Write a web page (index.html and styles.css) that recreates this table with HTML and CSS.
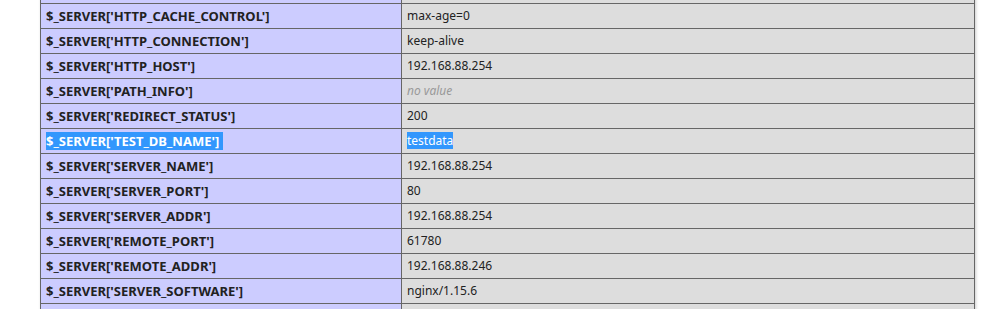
FILE: index.html
```html
<!DOCTYPE html>
<html>
<head>
<meta charset="utf-8">
<link rel="stylesheet" href="styles.css">
</head>
<body>
<div class="center">
<table>
<tr><td class="e">&nbsp;</td><td class="v">&nbsp;</td></tr>
<tr><td class="e">$_SERVER['HTTP_CACHE_CONTROL']</td><td class="v">max-age=0</td></tr>
<tr><td class="e">$_SERVER['HTTP_CONNECTION']</td><td class="v">keep-alive</td></tr>
<tr><td class="e">$_SERVER['HTTP_HOST']</td><td class="v">192.168.88.254</td></tr>
<tr><td class="e">$_SERVER['PATH_INFO']</td><td class="v"><i>no value</i></td></tr>
<tr><td class="e">$_SERVER['REDIRECT_STATUS']</td><td class="v">200</td></tr>
<tr><td class="e"><span class="sel">$_SERVER['TEST_DB_NAME']&nbsp;</span></td><td class="v"><span class="sel">testdata</span></td></tr>
<tr><td class="e">$_SERVER['SERVER_NAME']</td><td class="v">192.168.88.254</td></tr>
<tr><td class="e">$_SERVER['SERVER_PORT']</td><td class="v">80</td></tr>
<tr><td class="e">$_SERVER['SERVER_ADDR']</td><td class="v">192.168.88.254</td></tr>
<tr><td class="e">$_SERVER['REMOTE_PORT']</td><td class="v">61780</td></tr>
<tr><td class="e">$_SERVER['REMOTE_ADDR']</td><td class="v">192.168.88.246</td></tr>
<tr><td class="e">$_SERVER['SERVER_SOFTWARE']</td><td class="v">nginx/1.15.6</td></tr>
<tr><td class="e">&nbsp;</td><td class="v">&nbsp;</td></tr>
</table>
</div>
</body>
</html>
```
FILE: styles.css
```css
html, body {
  margin: 0;
  padding: 0;
  background: #fff;
  color: #222;
  font-family: "Noto Sans", "Open Sans", sans-serif;
}
.center {
  padding-left: 40px;
  margin-top: -22px;
}
table {
  border-collapse: collapse;
  width: 935px;
  box-shadow: 1px 2px 3px #ccc;
}
td {
  border: 1px solid #666;
  font-size: 12px;
  line-height: 16px;
  height: 16px;
  vertical-align: middle;
  padding: 4px 5px;
  white-space: nowrap;
}
.e {
  background: #ccf;
  width: 350px;
  font-weight: bold;
  font-size: 13px;
}
.v {
  background: #ddd;
}
.v i {
  color: #999;
}
.sel {
  background: #3297fd;
  color: #fff;
}
```
